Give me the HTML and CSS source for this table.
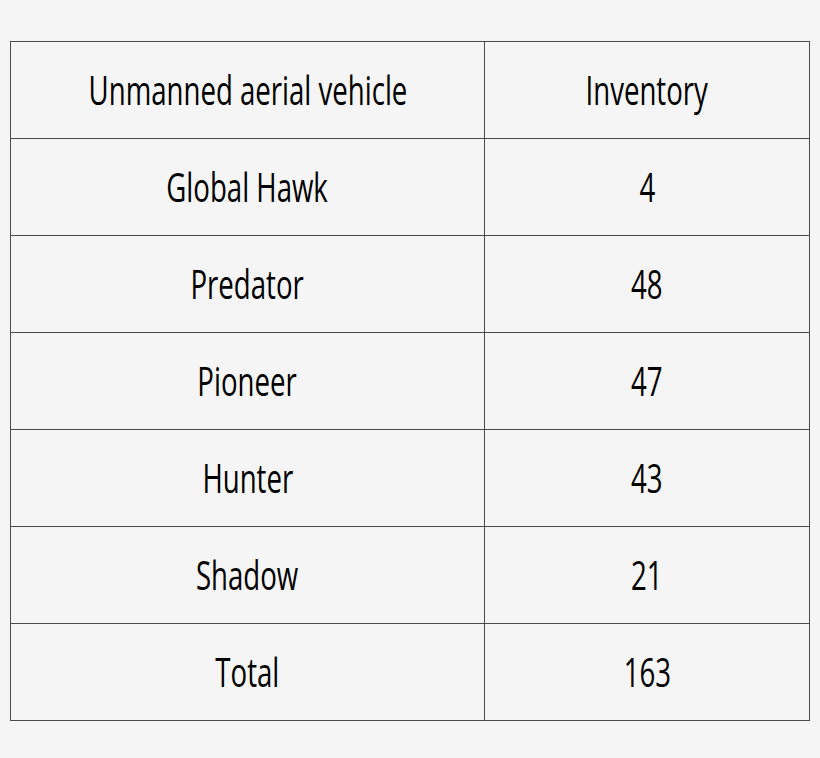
FILE: index.html
```html
<!DOCTYPE html>
<html>
<head>
<meta charset="utf-8">
<link rel="stylesheet" href="styles.css">
</head>
<body>
<table class="inv">
  <tr><td><span class="t">Unmanned aerial vehicle</span></td><td><span class="t">Inventory</span></td></tr>
  <tr><td><span class="t">Global Hawk</span></td><td><span class="t">4</span></td></tr>
  <tr><td><span class="t">Predator</span></td><td><span class="t">48</span></td></tr>
  <tr><td><span class="t">Pioneer</span></td><td><span class="t">47</span></td></tr>
  <tr><td><span class="t">Hunter</span></td><td><span class="t">43</span></td></tr>
  <tr><td><span class="t">Shadow</span></td><td><span class="t">21</span></td></tr>
  <tr><td><span class="t">Total</span></td><td><span class="t">163</span></td></tr>
</table>
</body>
</html>
```
FILE: styles.css
```css
html, body {
  margin: 0;
  padding: 0;
  background: #f5f5f5;
}
body {
  padding: 41px 0 0 10px;
  font-family: "Open Sans", sans-serif;
  color: #000;
}
.inv {
  border-collapse: collapse;
  width: 800px;
  table-layout: fixed;
}
.inv td {
  border: 1px solid #4a4a4a;
  height: 96px;
  padding: 0;
  text-align: center;
  vertical-align: middle;
}
.inv td:first-child {
  width: 473px;
}
.t {
  display: inline-block;
  font-size: 40px;
  font-weight: 500;
  line-height: 1;
  transform: scaleX(0.69);
  transform-origin: center;
  white-space: nowrap;
}
```
